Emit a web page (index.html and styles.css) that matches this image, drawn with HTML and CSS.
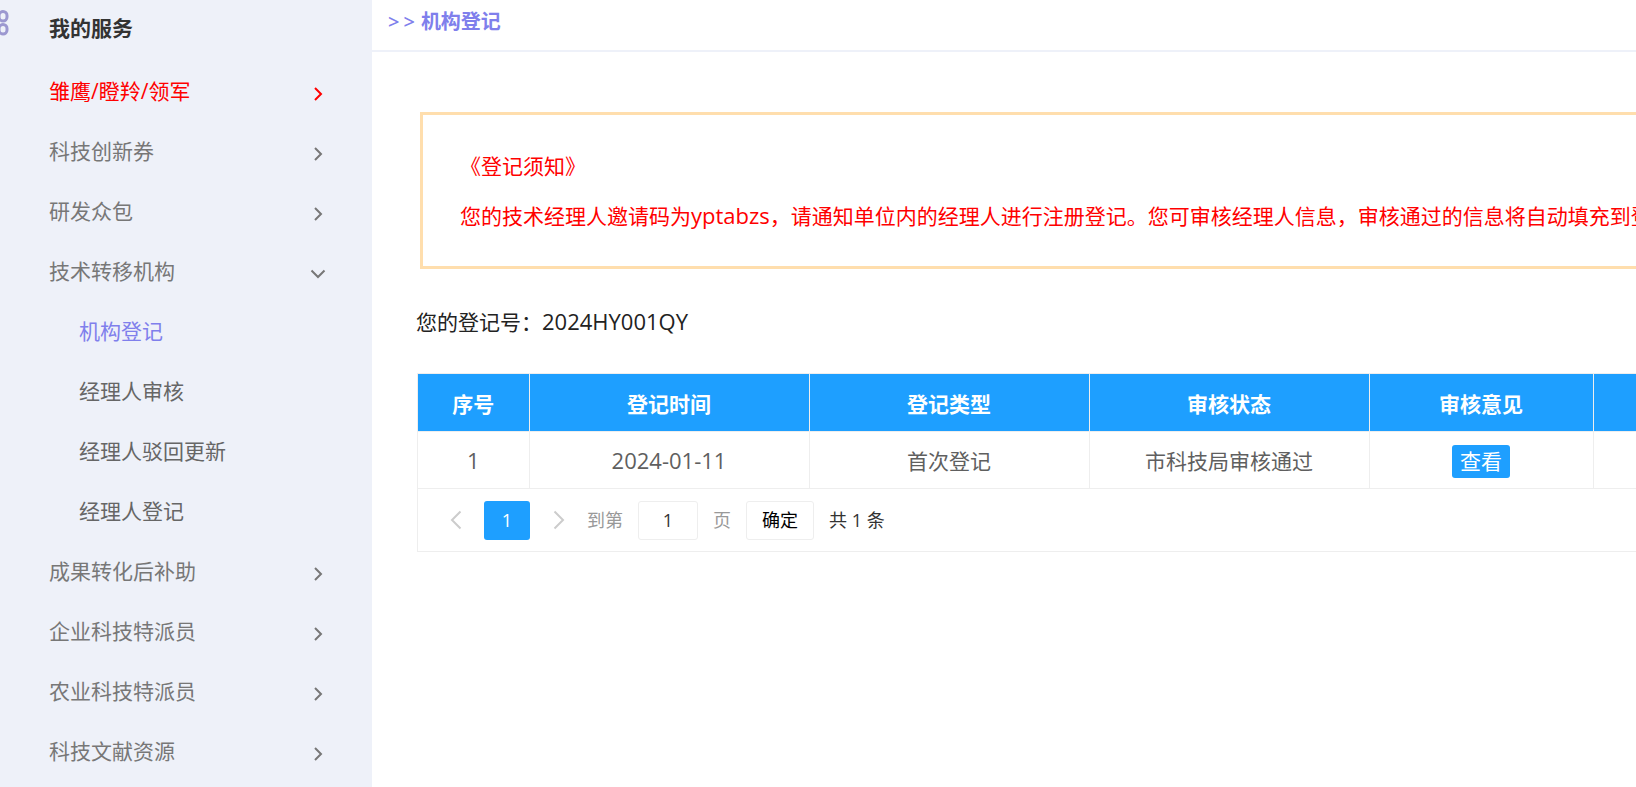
FILE: index.html
```
<!DOCTYPE html>
<html lang="zh-CN">
<head>
<meta charset="utf-8">
<title>机构登记</title>
<link rel="stylesheet" href="styles.css">
</head>
<body>
<svg class="defs" aria-hidden="true">
  <symbol id="right" viewBox="0 0 16 16"><path d="M5 2l6 6-6 6"/></symbol>
  <symbol id="down" viewBox="0 0 16 16"><path d="M1.500 4.500L8 11l6.500-6.500"/></symbol>
  <symbol id="page-prev" viewBox="0 0 12 20"><path d="M10.500 1.500L2 10l8.500 8.500"/></symbol>
  <symbol id="page-next" viewBox="0 0 12 20"><path d="M1.500 1.500L10 10l-8.500 8.500"/></symbol>
</svg>
<div class="layout">
  <aside class="sidebar">
    <h2 class="sidebar-title">
      <svg class="apps" viewBox="0 0 24 26"><rect x="1.500" y="1.500" width="8" height="9.500" rx="4"/><rect x="14" y="1.500" width="8" height="9.500" rx="4"/><rect x="1.500" y="14.500" width="8" height="9.500" rx="4"/><rect x="14" y="14.500" width="8" height="9.500" rx="4"/></svg>
      <span>我的服务</span>
    </h2>
    <nav class="menu">
      <a class="item hot" href="#">雏鹰/瞪羚/领军<svg class="arrow"><use href="#right"/></svg></a>
      <a class="item" href="#">科技创新券<svg class="arrow"><use href="#right"/></svg></a>
      <a class="item" href="#">研发众包<svg class="arrow"><use href="#right"/></svg></a>
      <a class="item" href="#">技术转移机构<svg class="arrow"><use href="#down"/></svg></a>
      <a class="item sub active" href="#">机构登记</a>
      <a class="item sub" href="#">经理人审核</a>
      <a class="item sub" href="#">经理人驳回更新</a>
      <a class="item sub" href="#">经理人登记</a>
      <a class="item" href="#">成果转化后补助<svg class="arrow"><use href="#right"/></svg></a>
      <a class="item" href="#">企业科技特派员<svg class="arrow"><use href="#right"/></svg></a>
      <a class="item" href="#">农业科技特派员<svg class="arrow"><use href="#right"/></svg></a>
      <a class="item" href="#">科技文献资源<svg class="arrow"><use href="#right"/></svg></a>
    </nav>
  </aside>
  <main class="main">
    <header class="crumb"><span class="marks"><span>&gt;</span><span>&gt;</span></span><h1 class="crumb-title">机构登记</h1></header>
    <div class="content">
      <section class="notice">
        <p class="notice-title">《登记须知》</p>
        <p>您的技术经理人邀请码为<span class="latin">yptabzs</span>，请通知单位内的经理人进行注册登记。您可审核经理人信息，审核通过的信息将自动填充到登</p>
      </section>
      <p class="number">您的登记号：<span class="latin">2024HY001QY</span></p>
      <section class="grid">
        <table class="table">
          <colgroup><col class="c-index"><col class="c-wide"><col class="c-wide"><col class="c-wide"><col class="c-mid"><col></colgroup>
          <thead><tr><th>序号</th><th>登记时间</th><th>登记类型</th><th>审核状态</th><th>审核意见</th><th></th></tr></thead>
          <tbody><tr><td><span class="latin">1</span></td><td><span class="latin">2024-01-11</span></td><td>首次登记</td><td>市科技局审核通过</td><td><button class="view" type="button">查看</button></td><td></td></tr></tbody>
        </table>
        <div class="pager">
          <button class="step" type="button" aria-label="上一页"><svg class="step-icon"><use href="#page-prev"/></svg></button>
          <button class="current" type="button">1</button>
          <button class="step" type="button" aria-label="下一页"><svg class="step-icon"><use href="#page-next"/></svg></button>
          <label class="jump">到第<input class="page-input" type="text" value="1">页</label>
          <button class="confirm" type="button">确定</button>
          <span class="total">共 1 条</span>
        </div>
      </section>
    </div>
  </main>
</div>
</body>
</html>
```

FILE: styles.css
```
* { box-sizing: border-box; }
body {
  margin: 0;
  font-family: "Open Sans", "Noto Sans CJK SC", sans-serif;
  font-size: 21px;
  line-height: 30px;
  color: #222;
  background: #fff;
}
h1, h2, p { margin: 0; }
a { text-decoration: none; }
button, input { font: inherit; }
svg { fill: none; stroke: currentColor; }
.defs { position: absolute; width: 0; height: 0; }
.layout { display: flex; min-height: 100vh; overflow: hidden; }
.latin { font-size: 22px; line-height: 1; }

.sidebar { flex: 0 0 372px; background: #eef1f9; }
.sidebar-title {
  display: flex;
  align-items: center;
  height: 60px;
  padding-bottom: 4px;
  font-size: 21px;
  color: #333;
}
.apps {
  width: 24px;
  height: 26px;
  margin: -10px 40px 0 -15px;
  color: #9c98d0;
  stroke-width: 3;
}
.item {
  display: flex;
  align-items: center;
  justify-content: space-between;
  height: 60px;
  padding: 1px 46px 0 49px;
  color: #777;
}
.item.hot { color: #f00; }
.item.sub { padding-left: 79px; color: #666; }
.item.active { color: #7f7fec; }
.arrow { width: 16px; height: 16px; margin-top: 7px; stroke-width: 2; }

.main { flex: 1; min-width: 0; overflow: hidden; }
.crumb {
  display: flex;
  align-items: center;
  gap: 6px;
  height: 52px;
  padding: 0 16px 7px;
  border-bottom: 2px solid #eef1f9;
  font-size: 20px;
  color: #7f7fec;
}
.crumb-title { font-size: 20px; }
.marks { display: flex; gap: 4px; font-weight: 600; }
.content { width: 1400px; padding: 60px 0 0 45px; }
.notice {
  margin-left: 3px;
  padding: 36px 37px 35px;
  border: 3px solid #ffdead;
  color: #f00;
  white-space: nowrap;
}
.notice p + p { margin-top: 20px; }
.number { padding: 38px 0 36px; margin-left: -1px; }
.grid { border: 1px solid #eee; }
.table { width: 100%; table-layout: fixed; border-collapse: collapse; color: #5f5f5f; }
.c-index { width: 111px; }
.c-wide { width: 280px; }
.c-mid { width: 224px; }
.table th, .table td {
  height: 57px;
  padding: 3px 0 0;
  text-align: center;
  border-right: 1px solid #eee;
  border-bottom: 1px solid #eee;
}
.table th { color: #fff; background: #1e9fff; }
.view {
  height: 33px;
  padding: 0 8px;
  line-height: 33px;
  border: 0;
  border-radius: 3px;
  color: #fff;
  background: #1e9fff;
}
.pager {
  display: flex;
  align-items: center;
  height: 62px;
  padding: 1px 0 0 9px;
  font-size: 18px;
}
.step { display: flex; justify-content: center; width: 57px; padding: 0; border: 0; color: #ccc; background: none; }
.step-icon { width: 12px; height: 20px; stroke-width: 2; }
.current { width: 46px; height: 39px; padding: 0; border: 0; border-radius: 3px; color: #fff; background: #1e9fff; }
.jump { display: flex; align-items: center; gap: 15px; color: #999; }
.page-input { width: 60px; height: 39px; padding: 0; border: 1px solid #eee; border-radius: 3px; text-align: center; color: #333; }
.confirm { width: 68px; height: 39px; margin: 0 15px; padding: 0; border: 1px solid #eee; border-radius: 3px; color: #000; background: #fff; }
.total { color: #333; }
```
